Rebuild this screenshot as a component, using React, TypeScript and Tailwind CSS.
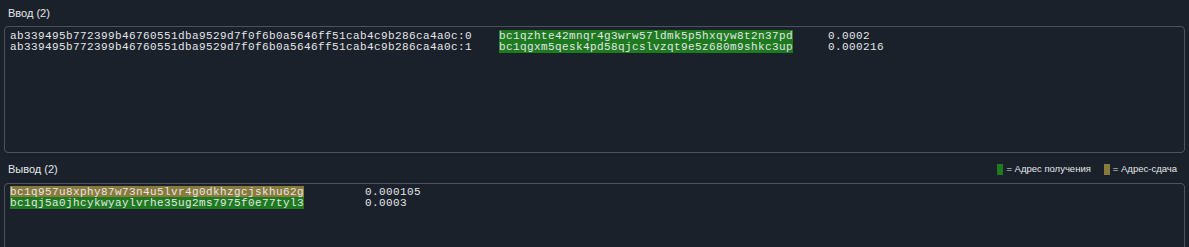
const inputs = [
  {
    txid: 'ab339495b772399b46760551dba9529d7f0f6b0a5646ff51cab4c9b286ca4a0c:0',
    address: 'bc1qzhte42mnqr4g3wrw57ldmk5p5hxqyw8t2n37pd',
    amount: '0.0002',
  },
  {
    txid: 'ab339495b772399b46760551dba9529d7f0f6b0a5646ff51cab4c9b286ca4a0c:1',
    address: 'bc1qgxm5qesk4pd58qjcslvzqt9e5z680m9shkc3up',
    amount: '0.000216',
  },
];

const outputs = [
  { address: 'bc1q957u8xphy87w73n4u5lvr4g0dkhzgcjskhu62g', amount: '0.000105', change: true },
  { address: 'bc1qj5a0jhcykwyaylvrhe35ug2ms7975f0e77tyl3', amount: '0.0003', change: false },
];

const mono = "font-['Liberation_Mono','DejaVu_Sans_Mono',monospace] text-[11px] leading-[11px] tracking-[0.4px]";

export default function App() {
  return (
    <main className="h-[247px] w-[1189px] overflow-hidden bg-[#1b212b] font-['Liberation_Sans','Arial',sans-serif] text-[#e4e6e8]">
      <div className="px-[4px] pt-[6px]">
        <div className="pl-[4px] text-[11px] leading-[14px]">Ввод (2)</div>
        <div className={`mt-[6px] h-[127px] rounded-[4px] border border-[#4a525c] pl-[5px] pt-[4px] ${mono}`}>
          {inputs.map((row) => (
            <div key={row.txid} className="flex whitespace-pre">
              <span className="w-[489px]">{row.txid}</span>
              <span className="w-[329px]">
                <span className="bg-[#1d7a1f]">{row.address}</span>
              </span>
              <span>{row.amount}</span>
            </div>
          ))}
        </div>

        <div className="mt-[9px] flex items-center justify-between pl-[4px] pr-[8px] text-[11px] leading-[14px]">
          <span>Вывод (2)</span>
          <div className="flex items-center text-[9.5px]">
            <span className="mr-[3px] h-[11px] w-[6px] bg-[#1f7a22]" />
            <span>= Адрес получения</span>
            <span className="ml-[13px] mr-[3px] h-[11px] w-[6px] bg-[#8a7b3c]" />
            <span>= Адрес-сдача</span>
          </div>
        </div>
        <div className={`mt-[7px] h-[80px] rounded-[4px] border border-[#4a525c] pl-[5px] pt-[3px] ${mono}`}>
          {outputs.map((row) => (
            <div key={row.address} className="flex whitespace-pre">
              <span className="w-[355px]">
                <span className={row.change ? 'bg-[#8a7b3c]' : 'bg-[#1d7a1f]'}>{row.address}</span>
              </span>
              <span>{row.amount}</span>
            </div>
          ))}
        </div>
      </div>
    </main>
  );
}
